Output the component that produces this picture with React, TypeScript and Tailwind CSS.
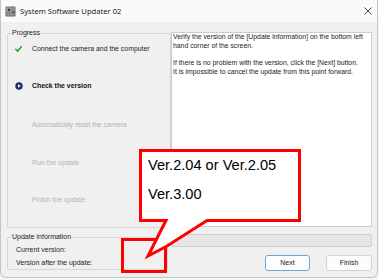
import React from "react";

const ui = { fontFamily: '"Liberation Sans", Arial, sans-serif' } as React.CSSProperties;

function TitleIcon() {
  return (
    <svg width="11" height="11" viewBox="0 0 11 11">
      <rect x="0.5" y="0.5" width="10" height="10" rx="1" fill="#5f6266" />
      <rect x="1.5" y="1.5" width="5" height="5" fill="#c9cdd2" />
      <rect x="2.5" y="2.5" width="3" height="3" fill="#3d4044" />
      <rect x="7.5" y="1.5" width="2" height="1" fill="#d6d9dd" />
      <rect x="7.5" y="3.5" width="2" height="1" fill="#d6d9dd" />
      <rect x="1.5" y="7.5" width="8" height="2" fill="#9a9ea3" />
    </svg>
  );
}

function Check() {
  return (
    <svg width="7" height="6" viewBox="0 0 8 7">
      <path d="M0.8 3.8 L3 6 L7.3 0.9" fill="none" stroke="#2fa82f" strokeWidth="1.9" strokeLinecap="round" strokeLinejoin="round" />
    </svg>
  );
}

function CurrentIcon() {
  return (
    <svg width="8" height="8" viewBox="0 0 8 8">
      <circle cx="4" cy="4" r="3.7" fill="#1b2f6e" />
      <path d="M3 2.2 L5.8 4 L3 5.8 Z" fill="#ffffff" />
    </svg>
  );
}

export default function App() {
  const steps = [
    { text: "Connect the camera and the computer", state: "done", mt: "mt-[7px]" },
    { text: "Check the version", state: "current", mt: "mt-[27px]" },
    { text: "Automatically reset the camera", state: "todo", mt: "mt-[29px]" },
    { text: "Run the update", state: "todo", mt: "mt-[28px]" },
    { text: "Finish the update", state: "todo", mt: "mt-[27px]" },
  ];
  return (
    <div className="relative w-[379px] h-[280px] bg-[#f7f7f7] overflow-hidden" style={ui}>
      <div className="w-[378px] h-[278px] bg-[#f0f0f0] border-l border-r border-b border-[#c4c4c4] rounded-b-[6px] flex flex-col">
        {/* title bar */}
        <div className="h-[22px] bg-[#fafafa] flex items-center pl-[4px] pr-[5px]">
          <TitleIcon />
          <div className="ml-[4px] text-[7.6px] leading-[10px] text-[#1b1b1b]" style={{ fontFamily: '"Noto Sans", "Liberation Sans", sans-serif' }}>
            System Software Updater 02
          </div>
          <div className="ml-auto w-[8px] h-[8px]">
            <svg width="8" height="8" viewBox="0 0 8 8">
              <path d="M0.5 0.5 L7.5 7.5 M7.5 0.5 L0.5 7.5" stroke="#2b2b2b" strokeWidth="0.9" />
            </svg>
          </div>
        </div>

        {/* main row */}
        <div className="flex items-start mt-[7px]">
          <fieldset className="ml-[6px] w-[164px] h-[199px] border border-[#d6d6d6] rounded-[2px]">
            <legend className="ml-[3px] px-[1px] text-[7px] leading-[8px] text-[#1b1b1b]">Progress</legend>
            <div className="flex flex-col">
              {steps.map((s) => (
                <div key={s.text} className={`flex items-center h-[10px] ${s.mt}`}>
                  <div className="w-[21px] flex justify-center">
                    {s.state === "done" ? <Check /> : s.state === "current" ? <CurrentIcon /> : null}
                  </div>
                  <div
                    className={`ml-[3px] text-[6.9px] leading-[10px] whitespace-nowrap ${
                      s.state === "current" ? "font-bold text-[#111]" : s.state === "done" ? "text-[#1b1b1b]" : "text-[#b2b2b2]"
                    }`}
                  >
                    {s.text}
                  </div>
                </div>
              ))}
            </div>
          </fieldset>
          <div className="mt-[3px] w-[201px] h-[195px] bg-white border border-[#cdcdcd] pl-[1px] text-[6.85px] leading-[8.75px] text-[#1b1b1b] whitespace-nowrap">
            <div>Verify the version of the [Update information] on the bottom left</div>
            <div>hand corner of the screen.</div>
            <div className="h-[8.75px]" />
            <div>If there is no problem with the version, click the [Next] button.</div>
            <div>It is impossible to cancel the update from this point forward.</div>
          </div>
        </div>

        {/* bottom row */}
        <div className="flex items-start mt-[5px]">
          <fieldset className="ml-[6px] w-[161px] h-[37px] border border-[#d6d6d6] rounded-[2px]">
            <legend className="ml-[3px] px-[1px] text-[7px] leading-[8px] text-[#1b1b1b]">Update information</legend>
            <div className="pl-[8px] text-[7px] leading-[10px] text-[#1b1b1b]">
              <div className="mt-[4px]">Current version:</div>
              <div className="mt-[3px]">Version after the update:</div>
            </div>
          </fieldset>
          <div className="ml-[3px] w-[201px] flex flex-col">
            <div className="mt-[1px] h-[13px] bg-[#e6e6e6] border border-[#cfcfcf] rounded-[2px]" />
            <div className="mt-[8px] flex justify-end gap-[16px]">
              <div className="w-[45px] h-[16px] bg-[#fdfdfd] border border-[#6aa6dc] rounded-[3px] flex items-center justify-center text-[7px] text-[#1b1b1b]">
                Next
              </div>
              <div className="w-[46px] h-[16px] bg-[#fcfcfc] border border-[#d3d3d3] rounded-[3px] flex items-center justify-center text-[7px] text-[#1b1b1b]">
                Finish
              </div>
            </div>
          </div>
        </div>
      </div>

      {/* annotation overlay */}
      <svg className="absolute left-0 top-0" width="379" height="280" viewBox="0 0 379 280">
        <rect x="122.5" y="239.5" width="43" height="32" fill="none" stroke="#ff0000" strokeWidth="3" />
        <path
          d="M140.5 150.5 H299.5 V220.5 H207 L167 246 L148 256 L166 220.5 H140.5 Z"
          fill="#ffffff"
          stroke="#ff0000"
          strokeWidth="3"
          strokeLinejoin="miter"
        />
      </svg>
      <div className="absolute left-[148px] top-[151px] text-[14.6px] leading-[29px] text-black" style={ui}>
        <div>Ver.2.04 or Ver.2.05</div>
        <div>Ver.3.00</div>
      </div>
    </div>
  );
}
